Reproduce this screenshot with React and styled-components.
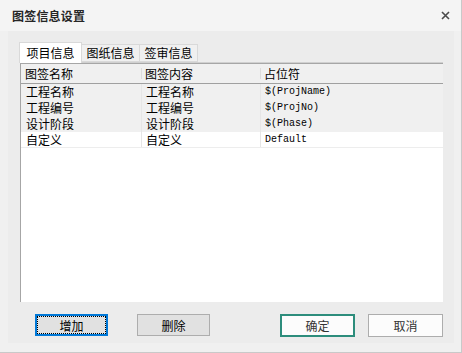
import React from 'react';
import styled, { createGlobalStyle } from 'styled-components';

const GlobalStyle = createGlobalStyle`
  html, body {
    margin: 0;
    padding: 0;
    background: #f0f0f0;
  }
  * {
    box-sizing: border-box;
  }
`;

const rows = [
  { name: '工程名称', content: '工程名称', holder: '$(ProjName)', builtin: true },
  { name: '工程编号', content: '工程编号', holder: '$(ProjNo)', builtin: true },
  { name: '设计阶段', content: '设计阶段', holder: '$(Phase)', builtin: true },
  { name: '自定义', content: '自定义', holder: 'Default', builtin: false },
];

const tabs = [
  { label: '项目信息', active: true },
  { label: '图纸信息' },
  { label: '签审信息' },
];

function App() {
  return (
    <>
      <GlobalStyle />
      <Window>
        <TitleBar>
          <Title>图签信息设置</Title>
          <Close aria-label="close">
            <svg width="9" height="9" viewBox="0 0 9 9">
              <path d="M1 1 L8 8 M8 1 L1 8" stroke="#4a4a4a" strokeWidth="1.6" />
            </svg>
          </Close>
        </TitleBar>

        <Body>
          <TabBar>
            {tabs.map(t => (
              <Tab key={t.label} active={t.active}>{t.label}</Tab>
            ))}
          </TabBar>

          <List>
            <HeaderRow>
              <HeadCell>图签名称</HeadCell>
              <HeadCell sep>图签内容</HeadCell>
              <HeadCell sep>占位符</HeadCell>
            </HeaderRow>
            {rows.map(r => (
              <Row key={r.name} builtin={r.builtin}>
                <Cell>{r.name}</Cell>
                <Cell sep>{r.content}</Cell>
                <Cell sep mono>{r.holder}</Cell>
              </Row>
            ))}
          </List>

          <Buttons>
            <Left>
              <Button focused>增加</Button>
              <Button>删除</Button>
            </Left>
            <Right>
              <DialogButton primary>确定</DialogButton>
              <DialogButton>取消</DialogButton>
            </Right>
          </Buttons>
        </Body>
      </Window>
    </>
  );
}

const Window = styled('div')`
  width: 462px;
  height: 353px;
  background: #f0f0f0;
  border-right: 1px solid #c9c9c9;
  border-bottom: 1px solid #c9c9c9;
  display: flex;
  flex-direction: column;
  font-family: 'Noto Sans CJK SC', 'Noto Sans', sans-serif;
  font-size: 12px;
  color: #000;
`;

const TitleBar = styled('div')`
  height: 31px;
  flex: 0 0 31px;
  background: #f4f4f4;
  display: flex;
  align-items: center;
  justify-content: space-between;
  padding: 0 11px 0 12px;
`;

const Title = styled('div')`
  font-size: 12px;
  font-weight: 700;
  color: #262626;
  letter-spacing: 0.2px;
`;

const Close = styled('div')`
  width: 10px;
  height: 10px;
  display: flex;
  align-items: center;
  justify-content: center;
`;

const Body = styled('div')`
  flex: 1;
  margin: 0 7px 9px 8px;
  background: #ececec;
  padding: 11px 11px 6px 11px;
  display: flex;
  flex-direction: column;
`;

const TabBar = styled('div')`
  display: flex;
  align-items: flex-end;
  height: 20px;
  flex: 0 0 20px;
`;

const Tab = styled('div')`
  width: ${p => (p.active ? '63px' : '58px')};
  height: ${p => (p.active ? '21px' : '18px')};
  margin-bottom: ${p => (p.active ? '-1px' : '0')};
  background: ${p => (p.active ? '#ffffff' : '#f0f0f0')};
  border: 1px solid #d9d9d9;
  border-bottom: ${p => (p.active ? 'none' : '1px solid #d9d9d9')};
  border-left: ${p => (p.active ? '1px solid #d9d9d9' : 'none')};
  display: flex;
  align-items: center;
  justify-content: center;
  font-size: 12px;
  line-height: 1;
  position: relative;
  z-index: ${p => (p.active ? 1 : 0)};
`;

const List = styled('div')`
  height: 240px;
  flex: 0 0 240px;
  margin-left: 1px;
  background: #ffffff;
  border-top: 1px solid #d0d0d0;
  border-left: 1px solid #a6a6a6;
  display: flex;
  flex-direction: column;
`;

const HeaderRow = styled('div')`
  height: 21px;
  display: grid;
  grid-template-columns: 120px 119px 1fr;
  background: #f0f0f0;
  border-top: 1px solid #a6a6a6;
  border-bottom: 1px solid #a0a0a0;
  align-items: center;
`;

const HeadCell = styled('div')`
  padding-left: 4px;
  height: 100%;
  display: flex;
  align-items: center;
  position: relative;

  ${p => p.sep && `
    &::before {
      content: '';
      position: absolute;
      left: 0;
      top: 4px;
      bottom: 4px;
      width: 1px;
      background: #dcdcdc;
    }
  `}
`;

const Row = styled('div')`
  height: 16px;
  display: grid;
  grid-template-columns: 120px 119px 1fr;
  background: ${p => (p.builtin ? '#f0f0f0' : '#ffffff')};
  border-bottom: ${p => (p.builtin ? 'none' : '1px solid #ededed')};
  align-items: center;
`;

const Cell = styled('div')`
  padding-left: ${p => (p.sep ? '4px' : '5px')};
  height: 100%;
  display: flex;
  align-items: center;
  border-left: ${p => (p.sep ? '1px solid #e6e6e6' : 'none')};
  font-family: ${p => (p.mono
    ? "'Liberation Mono', 'DejaVu Sans Mono', monospace"
    : "'Noto Sans CJK SC', 'Noto Sans', sans-serif")};
  font-size: ${p => (p.mono ? '10px' : '12px')};
  line-height: 1;
  white-space: pre;
`;

const Buttons = styled('div')`
  margin-top: 12px;
  display: flex;
  justify-content: space-between;
  align-items: flex-start;
  padding-left: 16px;
`;

const Left = styled('div')`
  display: flex;
  gap: 29px;
`;

const Right = styled('div')`
  display: flex;
  gap: 13px;
`;

const Button = styled('div')`
  width: 73px;
  height: 22px;
  background: #e1e1e1;
  border: ${p => (p.focused ? '2px solid #0078d7' : '1px solid #adadad')};
  display: flex;
  align-items: center;
  justify-content: center;
  font-size: 12px;
  color: #000;
  position: relative;

  ${p => p.focused && `
    &::after {
      content: '';
      position: absolute;
      inset: 0;
      border: 1px dotted #000;
    }
  `}
`;

const DialogButton = styled('div')`
  width: 75px;
  height: 23px;
  background: #fcfcfc;
  border: ${p => (p.primary ? '2px solid #2d8d7c' : '1px solid #adadad')};
  display: flex;
  align-items: center;
  justify-content: center;
  font-size: 12px;
  color: #333;
`;

export default App;
